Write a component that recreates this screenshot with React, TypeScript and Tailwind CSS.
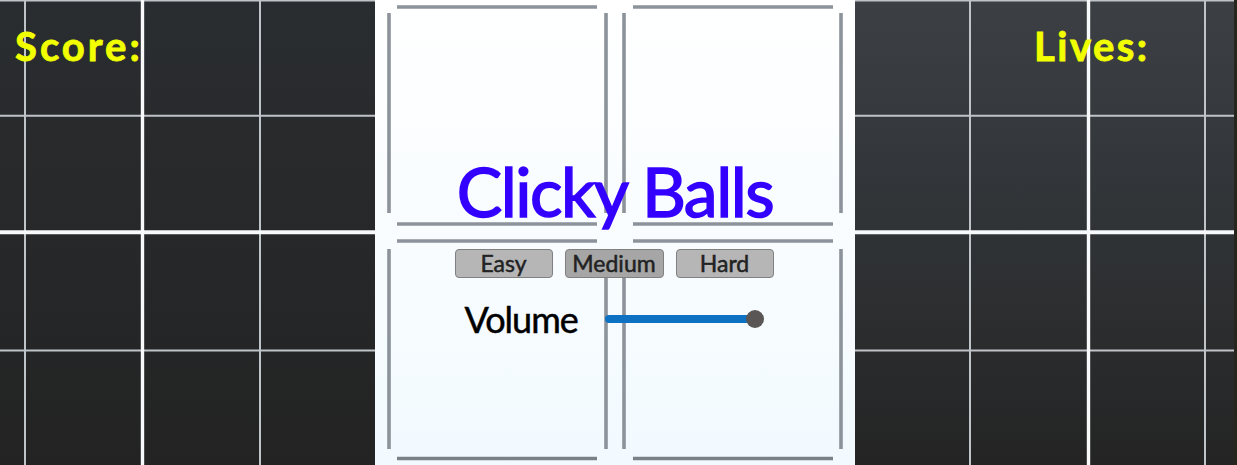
const scoreFont = "font-['Lato',sans-serif]";

function SideLines({ xs, w }: { xs: [number, number, number]; w: number }) {
  return (
    <svg className="absolute inset-0" width={w} height={465} aria-hidden="true">
      <g stroke="#bfc4c9" strokeWidth="2" fill="none">
        <path d={`M0 0.5H${w}M0 115.8H${w}M0 350.5H${w}`} />
        <path d={`M${xs[0]} 0V465M${xs[2]} 0V465`} />
      </g>
      <g stroke="#f7f9fb" fill="none">
        <path d={`M0 232.2H${w}`} strokeWidth="4" />
        <path d={`M${xs[1]} 0V465`} strokeWidth="3.4" />
      </g>
    </svg>
  );
}

function PanelLines() {
  return (
    <svg className="absolute inset-0" width={480} height={465} aria-hidden="true">
      <g stroke="#8d939a" strokeWidth="3.6" fill="none">
        <path d="M22 7H222M258 7H458M22 224H222M258 224H458M22 241H222M258 241H458" />
        <path d="M14 13V213M231 13V213M249 13V213M466 13V213" />
        <path d="M14 249V449M231 249V449M249 249V449M466 249V449" />
        <path d="M22 458.500H222M258 458.500H458" stroke="#7c8187" />
      </g>
    </svg>
  );
}

function LevelButton({ label, dark }: { label: string; dark?: boolean }) {
  return (
    <button
      type="button"
      className={`h-[29px] rounded-[4px] border border-[#808080] text-[23px] leading-none text-[#222] [-webkit-text-stroke:0.5px_#222] ${dark ? "w-[99px] bg-[#a6a6a6]" : "w-[98px] bg-[#b6b6b6]"}`}
    >
      {label}
    </button>
  );
}

export default function App() {
  return (
    <div className={`flex h-[465px] w-[1237px] overflow-hidden bg-[#26261c] ${scoreFont}`}>
      <aside className="relative h-full w-[375px] bg-gradient-to-b from-[#2a2d30] to-[#232323]">
        <SideLines xs={[25, 142.5, 260]} w={375} />
        <div className="relative pl-[15px] pt-[24px] text-[40px] font-bold leading-[44px] tracking-[3px] text-[#f2ff00] [-webkit-text-stroke:0.8px_#f2ff00]">Score:</div>
      </aside>

      <main className="relative flex h-full w-[480px] flex-col items-center bg-gradient-to-b from-white to-[#f2faff]">
        <PanelLines />
        <h1 className="relative mt-[152px] text-[68px] font-normal leading-[78px] tracking-[-1.5px] text-[#3300ff] [-webkit-text-stroke:1.5px_#3300ff]">Clicky Balls</h1>
        <div className="relative mt-[19px] mr-[2px] flex gap-[12px]">
          <LevelButton label="Easy" />
          <LevelButton label="Medium" dark />
          <LevelButton label="Hard" />
        </div>
        <div className="relative mt-[19px] mr-[2px] flex items-center">
          <span className="w-[140px] text-[36px] leading-[44px] tracking-[-1px] text-black [-webkit-text-stroke:0.5px_#000]">Volume</span>
          <div className="relative mr-[9px] h-[8px] w-[150px] rounded-full bg-[#0f71c1]">
            <span className="absolute right-[-9px] top-[-5px] size-[18px] rounded-full bg-[#5a5656]" />
          </div>
        </div>
      </main>

      <aside className="relative h-full w-[379px] bg-gradient-to-b from-[#3c4044] via-[#303336] via-50% to-[#242424]">
        <SideLines xs={[115, 233.5, 350]} w={379} />
        <div className="relative pl-[179px] pt-[24px] text-[40px] font-bold leading-[44px] tracking-[2.5px] text-[#f2ff00] [-webkit-text-stroke:0.8px_#f2ff00]">Lives:</div>
      </aside>
    </div>
  );
}
